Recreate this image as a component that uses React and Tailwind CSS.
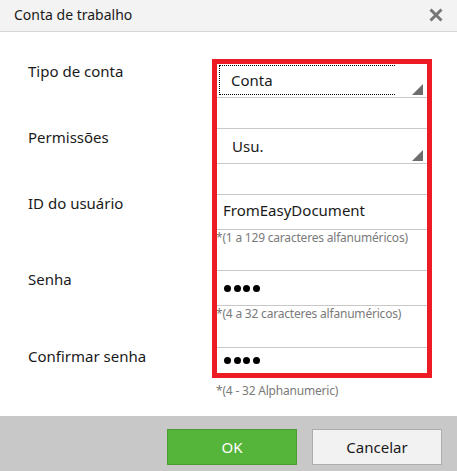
import React from "react";

const Tri = () => (
  <svg width="11" height="11" viewBox="0 0 11 11" className="self-end mb-[2px] mr-[4px] shrink-0">
    <polygon points="11,0 11,11 0,11" fill="#6d6d6d" />
  </svg>
);

const Dots = () => (
  <div className="flex gap-[2.5px] items-center">
    {[0, 1, 2, 3].map((i) => (
      <span key={i} className="block w-[7px] h-[7px] rounded-full bg-black" />
    ))}
  </div>
);

export default function App() {
  return (
    <div className="relative w-[457px] h-[471px] bg-white overflow-hidden text-[#1a1a1a]" style={{ fontFamily: '"Noto Sans", sans-serif' }}>
      {/* Title bar */}
      <div className="h-[32px] bg-[#f3f3f3] border-b border-[#d6d6d6] flex items-center justify-between pl-[14px] pr-[14px]">
        <span className="text-[14px] leading-[20px] -mt-[1px]">Conta de trabalho</span>
        <svg width="14" height="14" viewBox="0 0 14 14" className="-mt-[2px]">
          <path d="M1.5 1.5 L12.5 12.5 M12.5 1.5 L1.5 12.5" stroke="#777" strokeWidth="3" />
        </svg>
      </div>

      {/* Body */}
      <div className="h-[384px] pt-[30px]">
        {/* Row 1 */}
        <div className="flex items-start">
          <div className="w-[213px] pl-[28px] -mt-[1px] text-[15px] leading-[20px]">Tipo de conta</div>
          <div className="w-[215px] h-[36px] border border-[#c8c8c8] flex">
            <div className="flex-1">
              <div className="ml-[5px] mt-[2px] w-[176px] h-[30px] border border-r-0 border-dotted border-black pl-[11px] pt-[4px] text-[15px] leading-[20px]">
                Conta
              </div>
            </div>
            <Tri />
          </div>
        </div>
        {/* Row 2 */}
        <div className="flex items-start mt-[30px]">
          <div className="w-[213px] pl-[28px] -mt-[1px] text-[15px] leading-[20px]">Permissões</div>
          <div className="w-[215px] h-[36px] border border-[#c8c8c8] flex">
            <div className="flex-1">
              <div className="ml-[5px] mt-[2px] w-[175px] h-[30px] border border-transparent pl-[12px] pt-[4px] text-[15px] leading-[20px]">
                Usu.
              </div>
            </div>
            <Tri />
          </div>
        </div>
        {/* Row 3 */}
        <div className="flex items-start mt-[30px]">
          <div className="w-[213px] pl-[28px] -mt-[1px] text-[15px] leading-[20px]">ID do usuário</div>
          <div className="w-[215px]">
            <div className="h-[36px] border border-[#c8c8c8] pl-[9px] pt-[5px] text-[15px] leading-[20px]">FromEasyDocument</div>
            <div className="h-[16px] pl-[3px] text-[12px] leading-[16px] text-[#7a7a7a] tracking-[-0.2px] whitespace-nowrap">*(1 a 129 caracteres alfanuméricos)</div>
          </div>
        </div>
        {/* Row 4 */}
        <div className="flex items-start mt-[24px]">
          <div className="w-[213px] pl-[28px] -mt-[1px] text-[15px] leading-[20px]">Senha</div>
          <div className="w-[215px]">
            <div className="h-[36px] border border-[#c8c8c8] pl-[10px] flex items-center">
              <Dots />
            </div>
            <div className="h-[16px] pl-[3px] text-[12px] leading-[16px] text-[#7a7a7a] tracking-[-0.2px] whitespace-nowrap">*(4 a 32 caracteres alfanuméricos)</div>
          </div>
        </div>
        {/* Row 5 */}
        <div className="flex items-start mt-[25px]">
          <div className="w-[213px] pl-[28px] -mt-[1px] text-[15px] leading-[20px]">Confirmar senha</div>
          <div className="w-[215px]">
            <div className="h-[31px] border border-[#c8c8c8] pl-[10px] pt-[9px] flex items-start">
              <Dots />
            </div>
            <div className="h-[16px] mt-[5px] pl-[3px] text-[12px] leading-[16px] text-[#7a7a7a] tracking-[-0.2px] whitespace-nowrap">*(4 - 32 Alphanumeric)</div>
          </div>
        </div>
      </div>

      {/* Footer */}
      <div className="h-[55px] bg-[#c8c8c8] flex justify-end items-start pt-[13px] pr-[15px] gap-[15px]">
        <button className="w-[130px] h-[36px] bg-[#55b43a] border border-[#4b9a35] text-white text-[15px] leading-[20px]">OK</button>
        <button className="w-[130px] h-[36px] bg-[#f2f2f2] border border-[#adadad] text-[#1a1a1a] text-[15px] leading-[20px]">Cancelar</button>
      </div>

      {/* Red annotation box */}
      <div className="absolute left-[212px] top-[59px] w-[220px] h-[319px] border-[5px] border-[#ed1c24] pointer-events-none" />
    </div>
  );
}
